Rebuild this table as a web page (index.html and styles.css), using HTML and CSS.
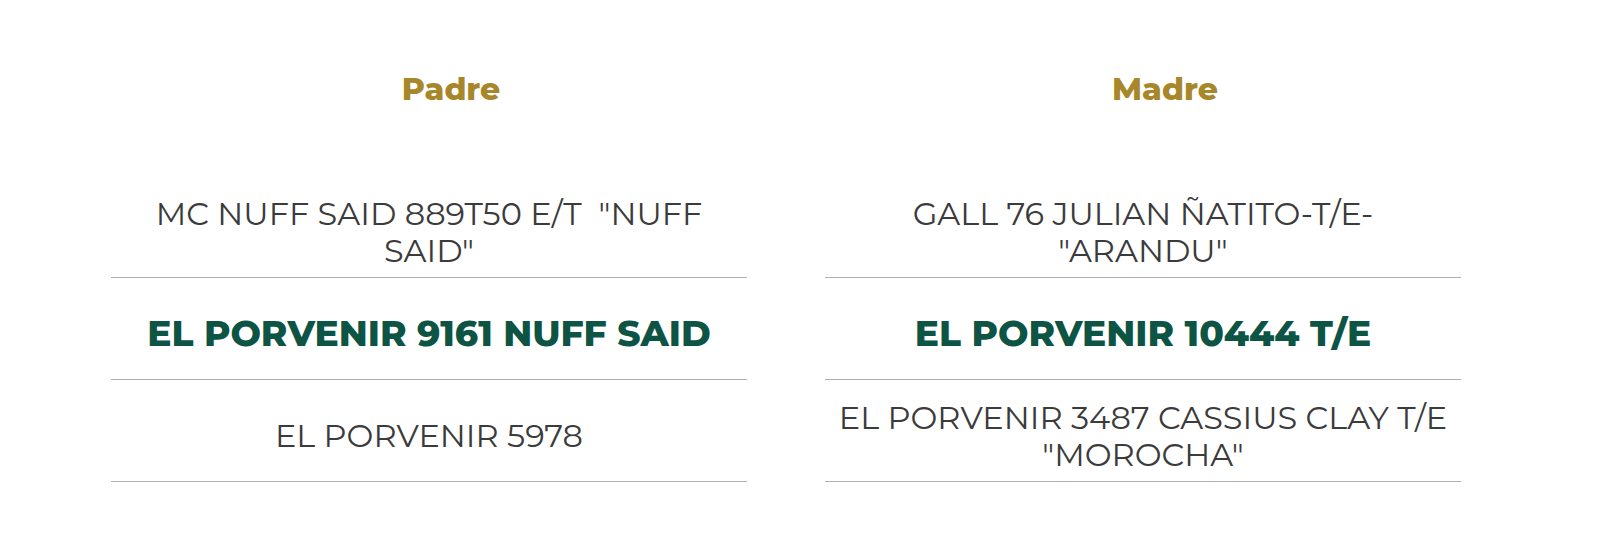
FILE: index.html
```html
<!DOCTYPE html>
<html lang="es">
<head>
<meta charset="utf-8">
<title>Padre y Madre</title>
<link rel="stylesheet" href="styles.css">
</head>
<body>
<div class="page">
  <div class="col">
    <h2 class="heading">Padre</h2>
    <div class="row"><p class="name">MC NUFF SAID 889T50 E/T&nbsp; "NUFF SAID"</p></div>
    <div class="row"><p class="name main">EL PORVENIR 9161 NUFF SAID</p></div>
    <div class="row"><p class="name">EL PORVENIR 5978</p></div>
  </div>
  <div class="col">
    <h2 class="heading">Madre</h2>
    <div class="row"><p class="name">GALL 76 JULIAN ÑATITO-T/E- "ARANDU"</p></div>
    <div class="row"><p class="name main">EL PORVENIR 10444 T/E</p></div>
    <div class="row"><p class="name">EL PORVENIR 3487 CASSIUS CLAY T/E "MOROCHA"</p></div>
  </div>
</div>
</body>
</html>
```

FILE: styles.css
```css
html, body {
  margin: 0;
  padding: 0;
  background: #ffffff;
}
body {
  font-family: Montserrat, "DejaVu Sans", sans-serif;
}
.page {
  display: flex;
  gap: 78px;
  padding: 72px 139px 0 111px;
}
.col {
  flex: none;
  width: 636px;
  display: flex;
  flex-direction: column;
}
.heading {
  margin: 0 0 70px 0;
  padding-left: 44px;
  height: 34px;
  line-height: 34px;
  text-align: center;
  font-size: 31.5px;
  font-weight: 800;
  color: #a8872b;
}
.row {
  box-sizing: border-box;
  height: 102px;
  padding-top: 10px;
  border-bottom: 1px solid #b0b0b0;
  display: flex;
  align-items: center;
  justify-content: center;
  text-align: center;
}
.name {
  margin: 0;
  font-size: 32px;
  line-height: 37px;
  color: #3b3b3b;
}
.name.main {
  font-size: 36px;
  font-weight: 800;
  color: #0d5444;
}
```
